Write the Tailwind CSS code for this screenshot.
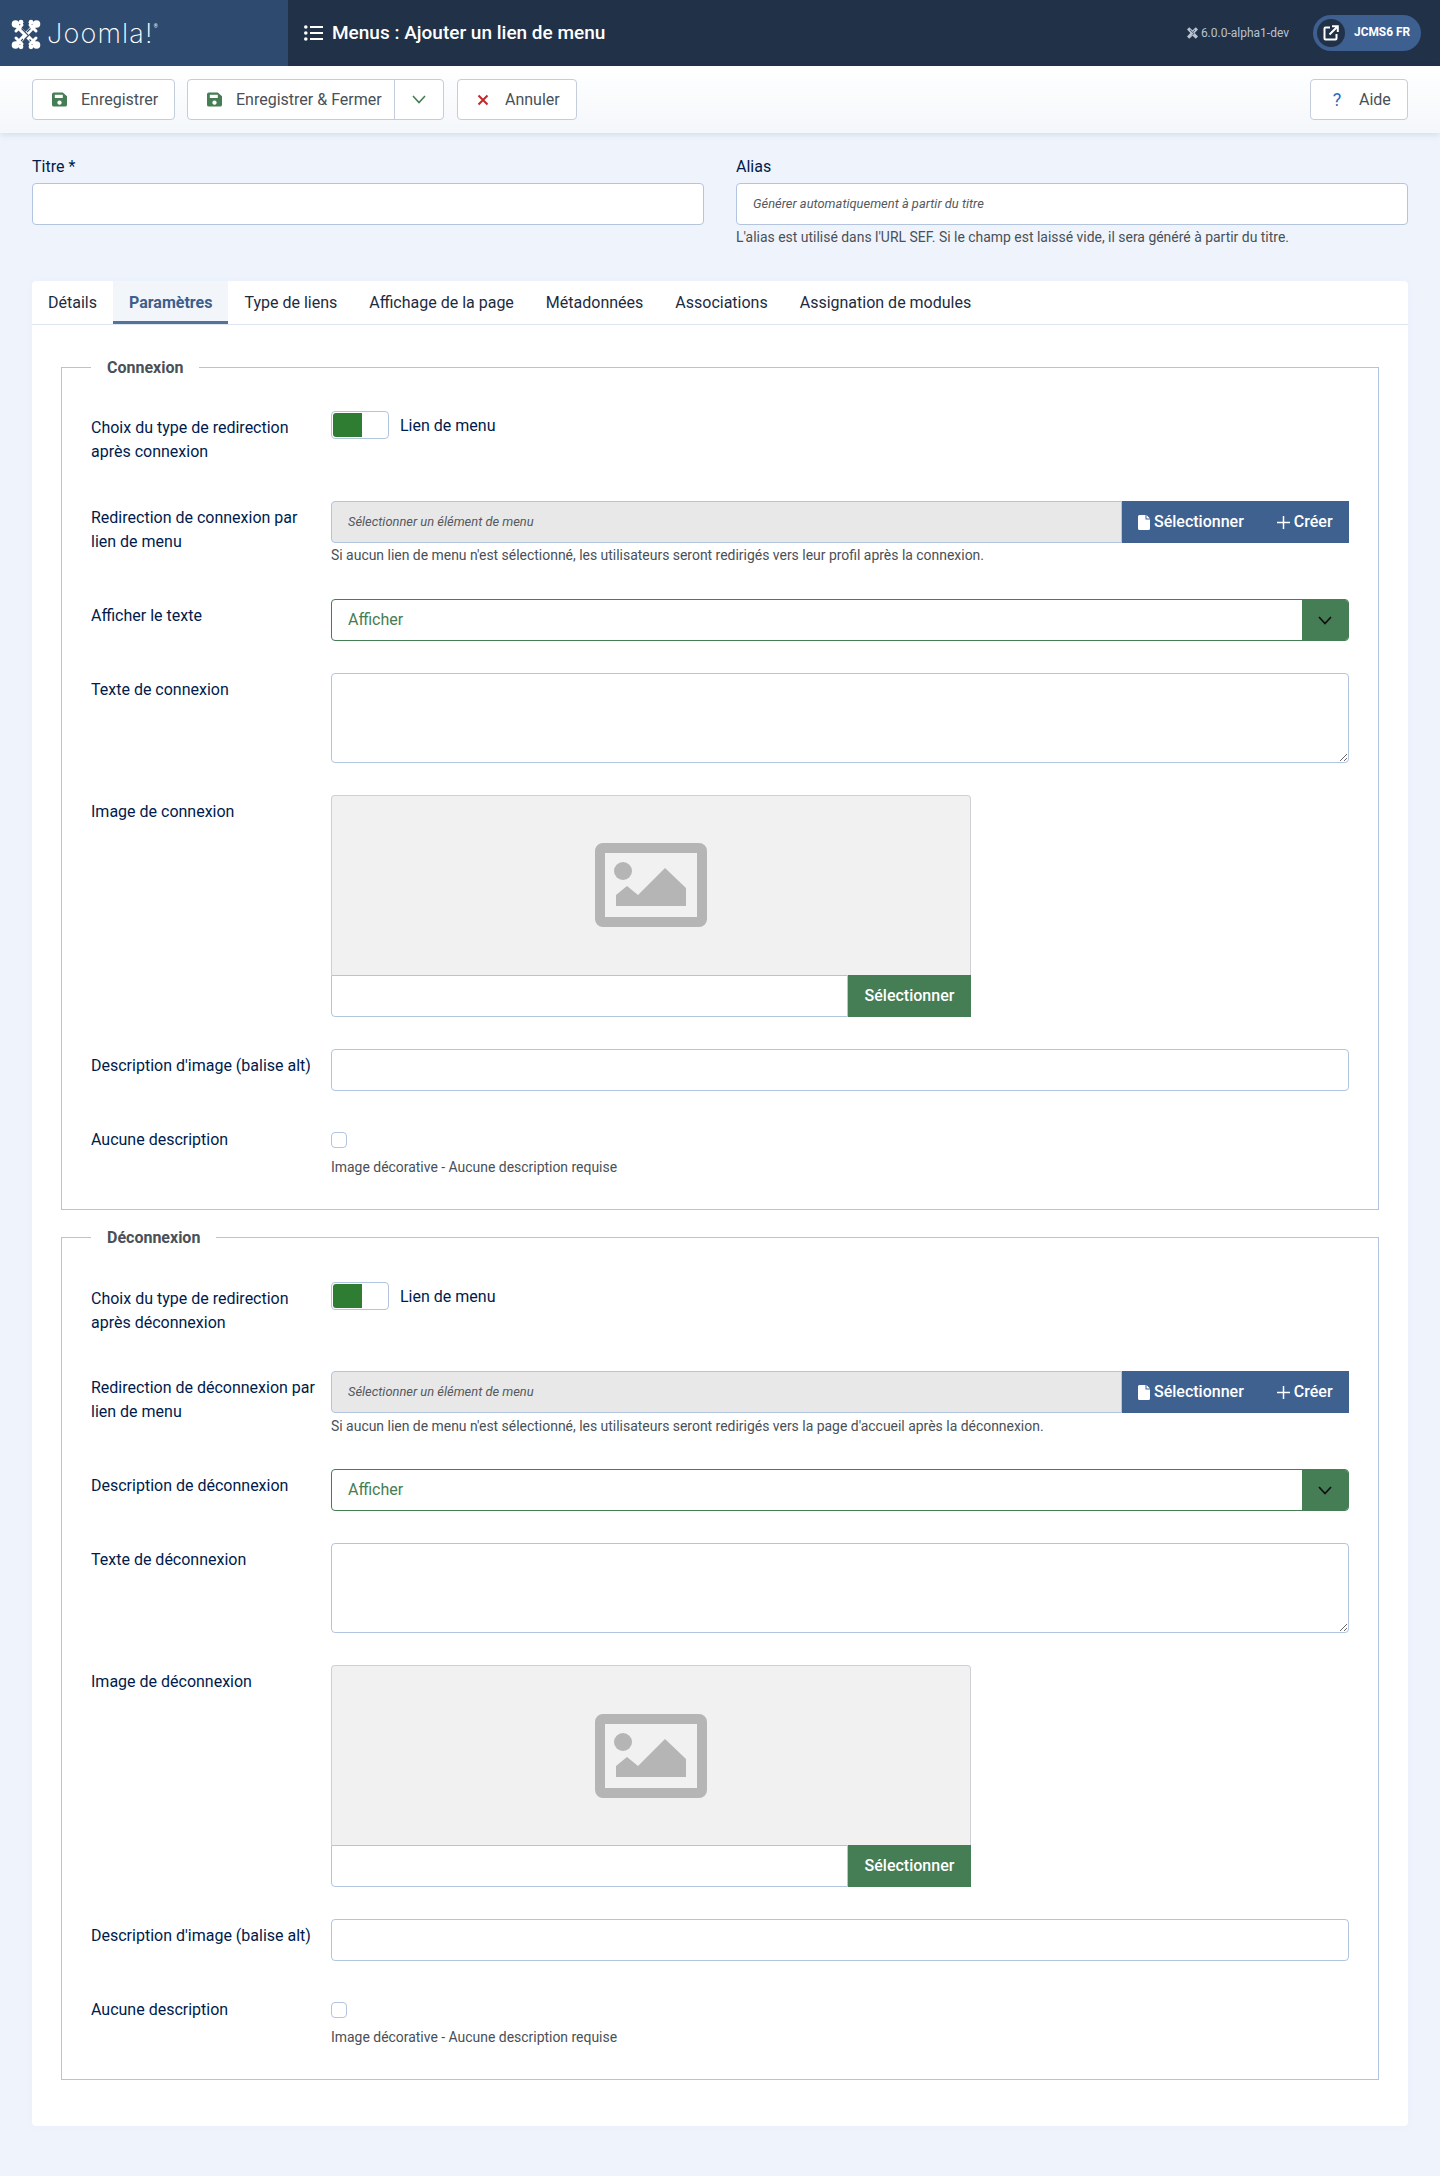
<!DOCTYPE html>
<html lang="fr">
<head>
  <meta charset="UTF-8" />
  <title>Menus : Ajouter un lien de menu</title>
  <script src="https://cdn.jsdelivr.net/npm/@tailwindcss/browser@4"></script>
</head>
<body class="bg-[#eff4fc] font-['Roboto',sans-serif] text-[16px] text-[#495057] min-h-[2176px]">

  <!-- Header -->
  <header class="h-[66px] bg-[#203148] flex items-center">
    <div class="w-[288px] h-full bg-[#2f4a6f] flex items-center pl-[11px]">
      <svg class="w-[30px] h-[31px] text-white mt-[2px]" viewBox="0 0 30 31" fill="none" stroke="currentColor">
        <g stroke-width="4.200" stroke-linecap="round">
          <path d="M6 7 L24 25" />
          <path d="M24 6 L6 25" />
          <path d="M5 12 L11 6 M25 12 L19 6 M5 19 L11 25 M25 19 L19 25" stroke-width="3" />
        </g>
        <g fill="currentColor" stroke="none">
          <circle cx="4.500" cy="5" r="3.800" /><circle cx="25.500" cy="5" r="3.800" />
          <circle cx="4.500" cy="26" r="3.800" /><circle cx="25.500" cy="26" r="3.800" />
          <circle cx="10" cy="3.200" r="2.400" /><circle cx="20" cy="3.200" r="2.400" />
          <circle cx="10" cy="27.800" r="2.400" /><circle cx="20" cy="27.800" r="2.400" />
        </g>
        <path d="M10.500 9.500 L17.500 16.500 L13.500 20.500 M19.500 9.500 L16 13 M10 22 L12 20 M20 22 L18.500 20.500" stroke="#2f4a6f" stroke-width="1.100" />
      </svg>
      <span class="ml-[6px] font-['Inter',sans-serif] font-extralight text-[27px] leading-none text-white tracking-[1.2px]">Joomla!</span>
      <span class="text-[5px] text-white self-start mt-[23px]">®</span>
    </div>
    <svg class="ml-[16px] w-[19px] h-[16px] text-white" viewBox="0 0 19 16" fill="currentColor">
      <circle cx="1.800" cy="2" r="1.800" /><circle cx="1.800" cy="8" r="1.800" /><circle cx="1.800" cy="14" r="1.800" />
      <rect x="6" y="1" width="13" height="2" /><rect x="6" y="7" width="13" height="2" /><rect x="6" y="13" width="13" height="2" />
    </svg>
    <h1 class="ml-[9px] text-[19px] font-medium text-white">Menus : Ajouter un lien de menu</h1>
    <div class="ml-auto flex items-center text-[12px] text-[#b9c3d0]">
      <svg class="w-[11px] h-[12px] mr-[3px]" viewBox="0 0 30 31" fill="currentColor">
        <path d="M6 0 L15 8 L24 0 L30 6 L21 15.500 L30 25 L24 31 L15 23 L6 31 L0 25 L9 15.500 L0 6 Z" />
        <path d="M8 7 L19 17 L14 22 M22 7 L17 12" stroke="#203148" stroke-width="2" fill="none" />
      </svg>
      <span>6.0.0-alpha1-dev</span>
    </div>
    <div class="ml-[24px] mr-[19px] w-[108px] h-[36px] rounded-full bg-[#3d6090] flex items-center pl-[4px]">
      <span class="w-[28px] h-[28px] rounded-full bg-[#203148] flex items-center justify-center">
        <svg class="w-[16px] h-[16px] text-white" viewBox="0 0 16 16" fill="none" stroke="currentColor" stroke-width="2">
          <path d="M7 2.500 H2.500 a1 1 0 0 0 -1 1 V13.500 a1 1 0 0 0 1 1 H12.500 a1 1 0 0 0 1 -1 V9" />
          <path d="M6.500 9.500 L14 2 M9 1.200 H14.800 V7" />
        </svg>
      </span>
      <span class="ml-[9px] text-[11.9px] font-bold text-white">JCMS6 FR</span>
    </div>
  </header>

  <!-- Toolbar -->
  <div class="h-[67px] bg-gradient-to-b from-white to-[#f4f7fb] shadow-[0_2px_6px_rgba(40,60,90,0.12)] flex items-start pt-[13px] px-[32px] gap-[12px] text-[16px] text-[#495057]">
    <button class="h-[41px] w-[143px] bg-white border border-[#c3cddb] rounded-[4px] flex items-center pl-[19px]">
      <svg class="w-[15px] h-[15px] text-[#457d54]" viewBox="0 0 16 16" fill="currentColor"><path fill-rule="evenodd" d="M2.500 0.500 H11.500 L16 4.500 V13.500 a2 2 0 0 1 -2 2 H2 a2 2 0 0 1 -2 -2 V2.500 a2 2 0 0 1 2 -2 Z M3 3 V6.500 H11.500 V3 Z M8 9 a2.300 2.300 0 1 0 0.010 0 Z" /></svg>
      <span class="ml-[14px]">Enregistrer</span>
    </button>
    <div class="h-[41px] w-[257px] bg-white border border-[#c3cddb] rounded-[4px] flex items-center">
      <button class="h-full w-[207px] flex items-center pl-[19px] border-r border-[#c3cddb]">
        <svg class="w-[15px] h-[15px] text-[#457d54]" viewBox="0 0 16 16" fill="currentColor"><path fill-rule="evenodd" d="M2.500 0.500 H11.500 L16 4.500 V13.500 a2 2 0 0 1 -2 2 H2 a2 2 0 0 1 -2 -2 V2.500 a2 2 0 0 1 2 -2 Z M3 3 V6.500 H11.500 V3 Z M8 9 a2.300 2.300 0 1 0 0.010 0 Z" /></svg>
        <span class="ml-[14px]">Enregistrer &amp; Fermer</span>
      </button>
      <button class="flex-1 flex justify-center">
        <svg class="w-[14px] h-[9px] text-[#457d54]" viewBox="0 0 14 9" fill="none" stroke="currentColor" stroke-width="1.600"><path d="M1 1 L7 7.500 L13 1" /></svg>
      </button>
    </div>
    <button class="ml-px h-[41px] w-[120px] bg-white border border-[#c3cddb] rounded-[4px] flex items-center pl-[19px]">
      <svg class="w-[12px] h-[12px] text-[#c52827]" viewBox="0 0 12 12" fill="none" stroke="currentColor" stroke-width="2"><path d="M1.500 1.500 L10.500 10.500 M10.500 1.500 L1.500 10.500" /></svg>
      <span class="ml-[16px]">Annuler</span>
    </button>
    <button class="ml-auto h-[41px] w-[98px] bg-white border border-[#c3cddb] rounded-[4px] flex items-center pl-[20px]">
      <span class="w-[12px] text-center text-[#2a69b8] text-[18px]">?</span>
      <span class="ml-[16px]">Aide</span>
    </button>
  </div>

  <main class="px-[32px]">
    <!-- Titre / Alias -->
    <div class="grid grid-cols-2 gap-[32px] pt-[22px] h-[148px]">
      <div>
        <label class="block h-[24px] leading-[24px] mb-[4px] text-[#001b4c]">Titre *</label>
        <div class="h-[42px] bg-white border border-[#b2c4de] rounded-[4px]"></div>
      </div>
      <div>
        <label class="block h-[24px] leading-[24px] mb-[4px] text-[#001b4c]">Alias</label>
        <div class="h-[42px] bg-white border border-[#b2c4de] rounded-[4px] flex items-center pl-[16px] text-[12.9px] italic text-[#55595e]">Générer automatiquement à partir du titre</div>
        <p class="mt-[2px] text-[13.95px] leading-[20px]">L'alias est utilisé dans l'URL SEF. Si le champ est laissé vide, il sera généré à partir du titre.</p>
      </div>
    </div>

    <!-- Card -->
    <div class="bg-white rounded-[4px] shadow-[0_0_8px_rgba(120,140,180,0.06)] h-[1845px]">
      <nav class="h-[44px] flex border-b border-[#dfe5f0] text-[16px] text-[#1c2b3f]">
        <a class="px-[16px] leading-[43px]">Détails</a>
        <a class="px-[16px] leading-[43px] font-bold text-[#3d5f8c] bg-[#f2f6fa] border-b-[3px] border-[#54739c] h-[43px]">Paramètres</a>
        <a class="px-[16px] leading-[43px]">Type de liens</a>
        <a class="px-[16px] leading-[43px]">Affichage de la page</a>
        <a class="px-[16px] leading-[43px]">Métadonnées</a>
        <a class="px-[16px] leading-[43px]">Associations</a>
        <a class="px-[16px] leading-[43px]">Assignation de modules</a>
      </nav>

      <div class="px-[29px] pt-[30px]">
        <!-- Connexion -->
        <fieldset class="border border-[#b2c4de] px-[29px] pt-[32px] h-[855px]">
          <legend class="px-[16px] h-[24px] leading-[26px] font-bold text-[#495057]">Connexion</legend>

          <div class="grid grid-cols-[240px_1fr] h-[90px]">
            <label class="pt-[5px] leading-[24px] text-[#001b4c] pr-[10px]">Choix du type de redirection après connexion</label>
            <div class="flex items-start">
              <div class="w-[58px] h-[28px] bg-white border border-[#b2c4de] rounded-[4px] p-px"><div class="w-[29px] h-full bg-[#2f7d32] rounded-l-[3px]"></div></div>
              <span class="ml-[11px] leading-[30px] text-[#001b4c]">Lien de menu</span>
            </div>
          </div>

          <div class="grid grid-cols-[240px_1fr] h-[98px]">
            <label class="pt-[5px] leading-[24px] text-[#001b4c] pr-[10px]">Redirection de connexion par lien de menu</label>
            <div>
              <div class="flex h-[42px]">
                <div class="flex-1 bg-[#e8e8e8] border border-[#b2c4de] rounded-l-[4px] flex items-center pl-[16px] text-[12.9px] italic text-[#55595e]">Sélectionner un élément de menu</div>
                <div class="w-[227px] bg-[#3e618f] text-white flex items-center pl-[16px] font-medium">
                  <svg class="w-[12px] h-[15px] mr-[4px]" viewBox="0 0 12 15" fill="currentColor"><path d="M1.500 0 H7.500 V4.500 H12 V13.500 a1.500 1.500 0 0 1 -1.500 1.500 H1.500 a1.500 1.500 0 0 1 -1.500 -1.500 V1.500 a1.500 1.500 0 0 1 1.500 -1.500 Z M8.500 0 L12 3.500 H8.500 Z" /></svg>
                  <span>Sélectionner</span>
                  <svg class="w-[13px] h-[13px] ml-[33px] mr-[4px]" viewBox="0 0 13 13" fill="none" stroke="currentColor" stroke-width="1.500"><path d="M6.500 0 V13 M0 6.500 H13" /></svg>
                  <span>Créer</span>
                </div>
              </div>
              <p class="mt-[2px] text-[13.95px] leading-[20px]">Si aucun lien de menu n'est sélectionné, les utilisateurs seront redirigés vers leur profil après la connexion.</p>
            </div>
          </div>

          <div class="grid grid-cols-[240px_1fr] h-[74px]">
            <label class="pt-[5px] leading-[24px] text-[#001b4c]">Afficher le texte</label>
            <div class="h-[42px] bg-white border border-[#457d54] rounded-[4px] flex items-center overflow-hidden">
              <span class="pl-[16px] text-[#457d54]">Afficher</span>
              <span class="ml-auto w-[46px] h-full bg-[#457d54] flex items-center justify-center">
                <svg class="w-[14px] h-[9px] text-[#111]" viewBox="0 0 14 9" fill="none" stroke="currentColor" stroke-width="1.800"><path d="M1 1 L7 7.500 L13 1" /></svg>
              </span>
            </div>
          </div>

          <div class="grid grid-cols-[240px_1fr] h-[122px]">
            <label class="pt-[5px] leading-[24px] text-[#001b4c]">Texte de connexion</label>
            <textarea class="h-[90px] bg-white border border-[#b2c4de] rounded-[4px]"></textarea>
          </div>

          <div class="grid grid-cols-[240px_1fr] h-[254px]">
            <label class="pt-[5px] leading-[24px] text-[#001b4c]">Image de connexion</label>
            <div class="w-[640px]">
              <div class="h-[180px] bg-[#f1f1f1] border border-b-0 border-[#cdd1d6] rounded-t-[4px] flex items-center justify-center pb-[2px]">
                <svg class="w-[112px] h-[84px] text-[#b5b5b5]" viewBox="0 0 112 84" fill="currentColor"><path fill-rule="evenodd" d="M8 0 H104 a8 8 0 0 1 8 8 V76 a8 8 0 0 1 -8 8 H8 a8 8 0 0 1 -8 -8 V8 a8 8 0 0 1 8 -8 Z M10 10 V74 H102 V10 Z" /><ellipse cx="28" cy="28" rx="9" ry="9" /><path d="M21 63 V52 L32 43 L43 52 L70 25 L91 45 V63 Z" /></svg>
              </div>
              <div class="flex h-[42px]">
                <div class="flex-1 bg-white border border-[#b2c4de] rounded-bl-[4px]"></div>
                <div class="w-[123px] bg-[#457d54] text-white font-medium flex items-center justify-center">Sélectionner</div>
              </div>
            </div>
          </div>

          <div class="grid grid-cols-[240px_1fr] h-[74px]">
            <label class="pt-[5px] leading-[24px] text-[#001b4c]">Description d'image (balise alt)</label>
            <div class="h-[42px] bg-white border border-[#b2c4de] rounded-[4px]"></div>
          </div>

          <div class="grid grid-cols-[240px_1fr]">
            <label class="pt-[5px] leading-[24px] text-[#001b4c]">Aucune description</label>
            <div class="pt-[9px]">
              <div class="w-[16px] h-[16px] bg-white border border-[#b2c4de] rounded-[4px]"></div>
              <p class="mt-[9px] text-[13.95px] leading-[20px]">Image décorative - Aucune description requise</p>
            </div>
          </div>
        </fieldset>

        <!-- Déconnexion -->
        <fieldset class="mt-[15px] border border-[#b2c4de] px-[29px] pt-[33px] h-[855px]">
          <legend class="px-[16px] h-[24px] leading-[26px] font-bold text-[#495057]">Déconnexion</legend>

          <div class="grid grid-cols-[240px_1fr] h-[89px]">
            <label class="pt-[5px] leading-[24px] text-[#001b4c] pr-[10px]">Choix du type de redirection après déconnexion</label>
            <div class="flex items-start">
              <div class="w-[58px] h-[28px] bg-white border border-[#b2c4de] rounded-[4px] p-px"><div class="w-[29px] h-full bg-[#2f7d32] rounded-l-[3px]"></div></div>
              <span class="ml-[11px] leading-[30px] text-[#001b4c]">Lien de menu</span>
            </div>
          </div>

          <div class="grid grid-cols-[240px_1fr] h-[98px]">
            <label class="pt-[5px] leading-[24px] text-[#001b4c] pr-[10px]">Redirection de déconnexion par lien de menu</label>
            <div>
              <div class="flex h-[42px]">
                <div class="flex-1 bg-[#e8e8e8] border border-[#b2c4de] rounded-l-[4px] flex items-center pl-[16px] text-[12.9px] italic text-[#55595e]">Sélectionner un élément de menu</div>
                <div class="w-[227px] bg-[#3e618f] text-white flex items-center pl-[16px] font-medium">
                  <svg class="w-[12px] h-[15px] mr-[4px]" viewBox="0 0 12 15" fill="currentColor"><path d="M1.500 0 H7.500 V4.500 H12 V13.500 a1.500 1.500 0 0 1 -1.500 1.500 H1.500 a1.500 1.500 0 0 1 -1.500 -1.500 V1.500 a1.500 1.500 0 0 1 1.500 -1.500 Z M8.500 0 L12 3.500 H8.500 Z" /></svg>
                  <span>Sélectionner</span>
                  <svg class="w-[13px] h-[13px] ml-[33px] mr-[4px]" viewBox="0 0 13 13" fill="none" stroke="currentColor" stroke-width="1.500"><path d="M6.500 0 V13 M0 6.500 H13" /></svg>
                  <span>Créer</span>
                </div>
              </div>
              <p class="mt-[3px] text-[13.95px] leading-[20px]">Si aucun lien de menu n'est sélectionné, les utilisateurs seront redirigés vers la page d'accueil après la déconnexion.</p>
            </div>
          </div>

          <div class="grid grid-cols-[240px_1fr] h-[74px]">
            <label class="pt-[5px] leading-[24px] text-[#001b4c]">Description de déconnexion</label>
            <div class="h-[42px] bg-white border border-[#457d54] rounded-[4px] flex items-center overflow-hidden">
              <span class="pl-[16px] text-[#457d54]">Afficher</span>
              <span class="ml-auto w-[46px] h-full bg-[#457d54] flex items-center justify-center">
                <svg class="w-[14px] h-[9px] text-[#111]" viewBox="0 0 14 9" fill="none" stroke="currentColor" stroke-width="1.800"><path d="M1 1 L7 7.500 L13 1" /></svg>
              </span>
            </div>
          </div>

          <div class="grid grid-cols-[240px_1fr] h-[122px]">
            <label class="pt-[5px] leading-[24px] text-[#001b4c]">Texte de déconnexion</label>
            <textarea class="h-[90px] bg-white border border-[#b2c4de] rounded-[4px]"></textarea>
          </div>

          <div class="grid grid-cols-[240px_1fr] h-[254px]">
            <label class="pt-[5px] leading-[24px] text-[#001b4c]">Image de déconnexion</label>
            <div class="w-[640px]">
              <div class="h-[180px] bg-[#f1f1f1] border border-b-0 border-[#cdd1d6] rounded-t-[4px] flex items-center justify-center">
                <svg class="w-[112px] h-[84px] text-[#b5b5b5]" viewBox="0 0 112 84" fill="currentColor"><path fill-rule="evenodd" d="M8 0 H104 a8 8 0 0 1 8 8 V76 a8 8 0 0 1 -8 8 H8 a8 8 0 0 1 -8 -8 V8 a8 8 0 0 1 8 -8 Z M10 10 V74 H102 V10 Z" /><ellipse cx="28" cy="28" rx="9" ry="9" /><path d="M21 63 V52 L32 43 L43 52 L70 25 L91 45 V63 Z" /></svg>
              </div>
              <div class="flex h-[42px]">
                <div class="flex-1 bg-white border border-[#b2c4de] rounded-bl-[4px]"></div>
                <div class="w-[123px] bg-[#457d54] text-white font-medium flex items-center justify-center">Sélectionner</div>
              </div>
            </div>
          </div>

          <div class="grid grid-cols-[240px_1fr] h-[74px]">
            <label class="pt-[5px] leading-[24px] text-[#001b4c]">Description d'image (balise alt)</label>
            <div class="h-[42px] bg-white border border-[#b2c4de] rounded-[4px]"></div>
          </div>

          <div class="grid grid-cols-[240px_1fr]">
            <label class="pt-[5px] leading-[24px] text-[#001b4c]">Aucune description</label>
            <div class="pt-[9px]">
              <div class="w-[16px] h-[16px] bg-white border border-[#b2c4de] rounded-[4px]"></div>
              <p class="mt-[9px] text-[13.95px] leading-[20px]">Image décorative - Aucune description requise</p>
            </div>
          </div>
        </fieldset>
      </div>
    </div>
  </main>
</body>
</html>
